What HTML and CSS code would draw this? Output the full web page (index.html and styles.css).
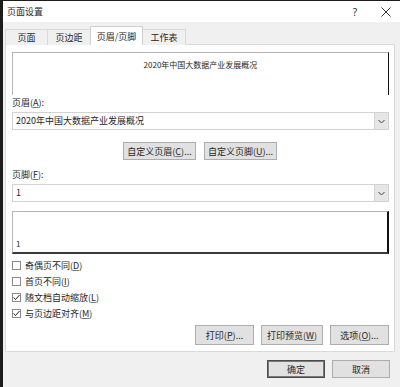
FILE: index.html
```html
<!DOCTYPE html>
<html lang="zh-CN">
<head>
<meta charset="utf-8">
<title>页面设置</title>
<link rel="stylesheet" href="styles.css">
</head>
<body>
<div class="window">
  <div class="titlebar">
    <span class="title">页面设置</span>
    <span class="help">?</span>
    <span class="close"><svg width="10" height="10" viewBox="0 0 10 10"><path d="M0.5 0.5 L9.5 9.5 M9.5 0.5 L0.5 9.5" stroke="#333" stroke-width="1" fill="none"/></svg></span>
  </div>
  <div class="body">
    <div class="tabs">
      <div class="tab t1">页面</div>
      <div class="tab t2">页边距</div>
      <div class="tab t3 active">页眉/页脚</div>
      <div class="tab t4">工作表</div>
    </div>
    <div class="panel">
      <div class="preview header-preview"><span class="preview-text">2020年中国大数据产业发展概况</span></div>
      <div class="field-label">页眉(<u>A</u>):</div>
      <div class="select">
        <span class="select-text">2020年中国大数据产业发展概况</span>
        <span class="arrow"><svg width="7" height="5" viewBox="0 0 7 5"><path d="M0.5 1 L3.5 4 L6.5 1" stroke="#444" stroke-width="1" fill="none"/></svg></span>
      </div>
      <div class="custom-row">
        <div class="btn custom">自定义页眉(<u>C</u>)...</div>
        <div class="btn custom">自定义页脚(<u>U</u>)...</div>
      </div>
      <div class="field-label second">页脚(<u>F</u>):</div>
      <div class="select">
        <span class="select-text">1</span>
        <span class="arrow"><svg width="7" height="5" viewBox="0 0 7 5"><path d="M0.5 1 L3.5 4 L6.5 1" stroke="#444" stroke-width="1" fill="none"/></svg></span>
      </div>
      <div class="preview footer-preview"><span class="footer-text">1</span></div>
      <div class="checks">
        <div class="check"><span class="box"></span><span>奇偶页不同(<u>D</u>)</span></div>
        <div class="check"><span class="box"></span><span>首页不同(<u>I</u>)</span></div>
        <div class="check"><span class="box"><svg width="9" height="9" viewBox="0 0 9 9"><path d="M1.5 4.5 L3.5 6.5 L7.5 2" stroke="#222" stroke-width="1" fill="none"/></svg></span><span>随文档自动缩放(<u>L</u>)</span></div>
        <div class="check"><span class="box"><svg width="9" height="9" viewBox="0 0 9 9"><path d="M1.5 4.5 L3.5 6.5 L7.5 2" stroke="#222" stroke-width="1" fill="none"/></svg></span><span>与页边距对齐(<u>M</u>)</span></div>
      </div>
      <div class="bottom-row">
        <div class="btn action b-print">打印(<u>P</u>)...</div>
        <div class="btn action b-preview">打印预览(<u>W</u>)</div>
        <div class="btn action b-options">选项(<u>O</u>)...</div>
      </div>
    </div>
    <div class="dialog-row">
      <div class="btn dlg default">确定</div>
      <div class="btn dlg">取消</div>
    </div>
  </div>
</div>
</body>
</html>
```

FILE: styles.css
```css
* { box-sizing: border-box; }
html, body { margin: 0; padding: 0; }
body {
  width: 400px;
  height: 387px;
  overflow: hidden;
  font-family: "Noto Sans CJK SC", "Noto Sans", sans-serif;
  font-size: 9px;
  color: #262626;
  background: #f0f0f0;
}
u { text-decoration: underline; text-underline-offset: 1px; text-decoration-color: #777; }
.window {
  width: 400px;
  height: 387px;
  border-left: 3px solid #1c1c1c;
  border-top: 1px solid #1c1c1c;
  display: flex;
  flex-direction: column;
  background: #f0f0f0;
}
.titlebar {
  height: 21px;
  background: #ffffff;
  display: flex;
  align-items: center;
  padding-left: 4px;
  flex-shrink: 0;
}
.title { flex: 1; font-size: 9px; }
.help { width: 12px; text-align: center; margin-right: 20px; font-family: "Noto Sans", sans-serif; font-size: 10px; color: #333; }
.close { width: 10px; height: 10px; margin-right: 9px; display: flex; }
.body {
  flex: 1;
  padding: 5px 5px 0 2px;
  display: flex;
  flex-direction: column;
}
.tabs {
  display: flex;
  align-items: flex-end;
  height: 18px;
  position: relative;
  z-index: 1;
  margin-bottom: -1px;
}
.tab {
  height: 16px;
  border: 1px solid #d9d9d9;
  border-bottom: none;
  background: #f0f0f0;
  display: flex;
  align-items: center;
  justify-content: center;
  margin-right: -1px;
}
.t1 { width: 43px; }
.t2 { width: 44px; }
.t3 { width: 53px; }
.t4 { width: 44px; }
.tab.active {
  height: 19px;
  background: #ffffff;
  border-color: #d0d0d0;
  position: relative;
  z-index: 2;
}
.panel {
  width: 390px;
  height: 308px;
  background: #ffffff;
  border: 1px solid #d9d9d9;
  padding: 7px 5px 0 6px;
  display: flex;
  flex-direction: column;
}
.preview {
  height: 43px;
  border-left: 1px solid #b5b5b5;
  border-top: 1px solid #b5b5b5;
  border-right: 1px solid #111;
  background: #fff;
  flex-shrink: 0;
}
.header-preview {
  display: flex;
  justify-content: center;
  padding-top: 6px;
}
.preview-text { font-size: 8px; line-height: 12px; }
.field-label {
  margin-top: 1px;
  height: 14px;
  line-height: 14px;
}
.field-label.second { margin-top: 8px; }
.select {
  margin-top: 2px;
  height: 18px;
  border: 1px solid #d2d2d2;
  display: flex;
  align-items: center;
  flex-shrink: 0;
}
.select-text { flex: 1; padding-left: 3px; line-height: 16px; }
.arrow {
  width: 14px;
  height: 16px;
  background: #e6e6e6;
  border-left: 1px solid #d2d2d2;
  display: flex;
  align-items: center;
  justify-content: center;
}
.btn {
  background: #e1e1e1;
  border: 1px solid #adadad;
  display: flex;
  align-items: center;
  justify-content: center;
  color: #262626;
}
.custom-row {
  margin-top: 12px;
  display: flex;
  gap: 8px;
  padding-left: 111px;
}
.custom { width: 73px; height: 18px; }
.footer-preview {
  margin-top: 9px;
  border-bottom: 2px solid #3a3a3a;
  border-right: 2px solid #111;
  display: flex;
  align-items: flex-end;
  padding: 0 0 3px 3px;
}
.footer-text { font-size: 8px; line-height: 10px; }
.checks { margin-top: 3px; display: flex; flex-direction: column; }
.check {
  height: 16px;
  display: flex;
  align-items: center;
  gap: 4px;
}
.box {
  width: 9px;
  height: 9px;
  border: 1px solid #8a8a8a;
  background: #fff;
  display: flex;
}
.box svg { margin: -1px; }
.bottom-row {
  margin-top: 4px;
  display: flex;
  justify-content: flex-end;
  gap: 7px;
}
.action { height: 20px; }
.b-print { width: 59px; }
.b-preview { width: 62px; }
.b-options { width: 59px; }
.dialog-row {
  margin-top: 8px;
  display: flex;
  justify-content: flex-end;
  gap: 7px;
  padding-right: 5px;
}
.dlg { width: 58px; height: 18px; }
.dlg.default { border: 1px solid #4a4a4a; box-shadow: inset 0 0 0 1px #7a7a7a; }
```
